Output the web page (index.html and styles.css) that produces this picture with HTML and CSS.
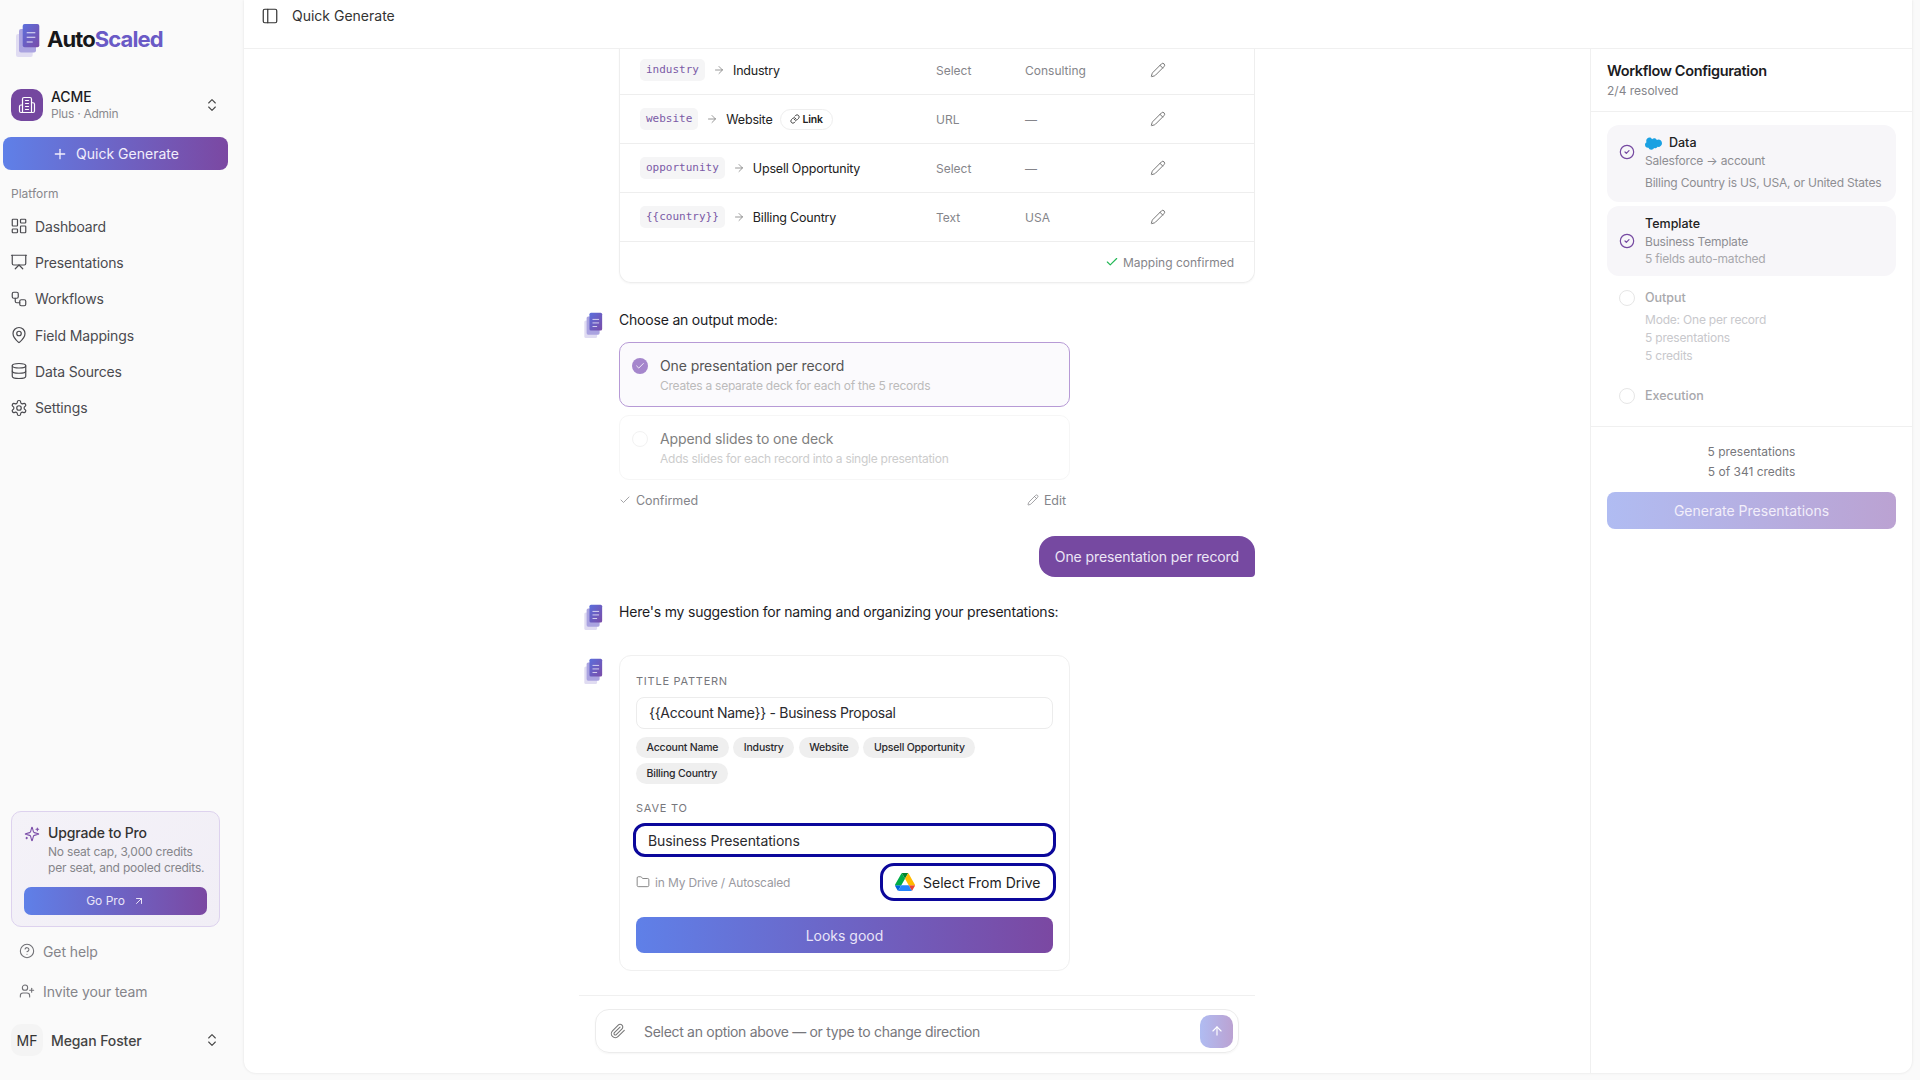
FILE: index.html
```html
<!DOCTYPE html>
<html lang="en">
<head>
    <meta charset="UTF-8">
    <meta name="viewport" content="width=device-width, initial-scale=1.0">
    <title>Quick Generate</title>
    <link rel="stylesheet" href="styles.css">
</head>
<body>
    <!-- icon sprite -->
    <svg class="sprite" xmlns="http://www.w3.org/2000/svg">
        <defs>
            <linearGradient id="docGrad" x1="0" y1="0" x2="1" y2="1">
                <stop offset="0" stop-color="#5b6fdc"/>
                <stop offset="1" stop-color="#7a4ca8"/>
            </linearGradient>
        </defs>
        <symbol id="i-logo" viewBox="0 0 24 34">
            <rect x="0" y="11" width="16.7" height="23" rx="2" fill="#e0dcf2"/>
            <rect x="3" y="6" width="17" height="23.6" rx="2" fill="#aaa3e0"/>
            <rect x="6.7" y="1" width="16.6" height="23.3" rx="2" fill="url(#docGrad)"/>
            <path d="M10.7 9.700h8.600M10.700 14.300h8.600M10.700 19h6" stroke="#e8e6f8" stroke-width="1.1" fill="none"/>
        </symbol>
        <g fill="none" stroke="currentColor" stroke-linecap="round" stroke-linejoin="round">
            <symbol id="i-panel" viewBox="0 0 24 24"><rect x="3" y="3" width="18" height="18" rx="2"/><path d="M9 3v18"/></symbol>
            <symbol id="i-updown" viewBox="0 0 24 24"><path d="m7 15 5 5 5-5"/><path d="m7 9 5-5 5 5"/></symbol>
            <symbol id="i-building" viewBox="0 0 24 24"><path d="M6 22V4a2 2 0 0 1 2-2h8a2 2 0 0 1 2 2v18Z"/><path d="M6 12H4a2 2 0 0 0-2 2v6a2 2 0 0 0 2 2h2"/><path d="M18 9h2a2 2 0 0 1 2 2v9a2 2 0 0 1-2 2h-2"/><path d="M10 6h4"/><path d="M10 10h4"/><path d="M10 14h4"/><path d="M10 18h4"/></symbol>
            <symbol id="i-plus" viewBox="0 0 24 24"><path d="M5 12h14"/><path d="M12 5v14"/></symbol>
            <symbol id="i-dashboard" viewBox="0 0 24 24"><rect x="3" y="3" width="7" height="9" rx="1"/><rect x="14" y="3" width="7" height="5" rx="1"/><rect x="14" y="12" width="7" height="9" rx="1"/><rect x="3" y="16" width="7" height="5" rx="1"/></symbol>
            <symbol id="i-presentation" viewBox="0 0 24 24"><path d="M2 3h20"/><path d="M21 3v11a2 2 0 0 1-2 2H5a2 2 0 0 1-2-2V3"/><path d="m7 21 5-5 5 5"/></symbol>
            <symbol id="i-workflow" viewBox="0 0 24 24"><rect x="3" y="3" width="8" height="8" rx="2"/><path d="M7 11v4a2 2 0 0 0 2 2h4"/><rect x="13" y="13" width="8" height="8" rx="2"/></symbol>
            <symbol id="i-pin" viewBox="0 0 24 24"><path d="M20 10c0 4.993-5.539 10.193-7.399 11.799a1 1 0 0 1-1.202 0C9.539 20.193 4 14.993 4 10a8 8 0 0 1 16 0"/><circle cx="12" cy="10" r="3"/></symbol>
            <symbol id="i-database" viewBox="0 0 24 24"><ellipse cx="12" cy="5" rx="9" ry="3"/><path d="M3 5V19A9 3 0 0 0 21 19V5"/><path d="M3 12A9 3 0 0 0 21 12"/></symbol>
            <symbol id="i-settings" viewBox="0 0 24 24"><path d="M12.22 2h-.44a2 2 0 0 0-2 2v.18a2 2 0 0 1-1 1.73l-.43.25a2 2 0 0 1-2 0l-.15-.08a2 2 0 0 0-2.73.73l-.22.38a2 2 0 0 0 .73 2.73l.15.1a2 2 0 0 1 1 1.72v.51a2 2 0 0 1-1 1.74l-.15.09a2 2 0 0 0-.73 2.73l.22.38a2 2 0 0 0 2.73.73l.15-.08a2 2 0 0 1 2 0l.43.25a2 2 0 0 1 1 1.73V20a2 2 0 0 0 2 2h.44a2 2 0 0 0 2-2v-.18a2 2 0 0 1 1-1.73l.43-.25a2 2 0 0 1 2 0l.15.08a2 2 0 0 0 2.73-.73l.22-.39a2 2 0 0 0-.73-2.73l-.15-.08a2 2 0 0 1-1-1.74v-.5a2 2 0 0 1 1-1.74l.15-.09a2 2 0 0 0 .73-2.73l-.22-.38a2 2 0 0 0-2.73-.73l-.15.08a2 2 0 0 1-2 0l-.43-.25a2 2 0 0 1-1-1.73V4a2 2 0 0 0-2-2z"/><circle cx="12" cy="12" r="3"/></symbol>
            <symbol id="i-sparkles" viewBox="0 0 24 24"><path d="M9.937 15.5A2 2 0 0 0 8.5 14.063l-6.135-1.582a.5.5 0 0 1 0-.962L8.5 9.936A2 2 0 0 0 9.937 8.5l1.582-6.135a.5.5 0 0 1 .963 0L14.063 8.5A2 2 0 0 0 15.5 9.937l6.135 1.581a.5.5 0 0 1 0 .964L15.5 14.063a2 2 0 0 0-1.437 1.437l-1.582 6.135a.5.5 0 0 1-.963 0z"/><path d="M20 3v4"/><path d="M22 5h-4"/><path d="M4 17v2"/><path d="M5 18H3"/></symbol>
            <symbol id="i-upright" viewBox="0 0 24 24"><path d="M7 7h10v10"/><path d="M7 17 17 7"/></symbol>
            <symbol id="i-help" viewBox="0 0 24 24"><circle cx="12" cy="12" r="10"/><path d="M9.09 9a3 3 0 0 1 5.83 1c0 2-3 3-3 3"/><path d="M12 17h.01"/></symbol>
            <symbol id="i-userplus" viewBox="0 0 24 24"><path d="M16 21v-2a4 4 0 0 0-4-4H6a4 4 0 0 0-4 4v2"/><circle cx="9" cy="7" r="4"/><path d="M19 8v6"/><path d="M22 11h-6"/></symbol>
            <symbol id="i-pencil" viewBox="0 0 24 24"><path d="M21.174 6.812a1 1 0 0 0-3.986-3.987L3.842 16.174a2 2 0 0 0-.5.83l-1.321 4.352a.5.5 0 0 0 .623.622l4.353-1.32a2 2 0 0 0 .83-.497z"/><path d="m15 5 4 4"/></symbol>
            <symbol id="i-right" viewBox="0 0 24 24"><path d="M5 12h14"/><path d="m12 5 7 7-7 7"/></symbol>
            <symbol id="i-link" viewBox="0 0 24 24"><path d="M10 13a5 5 0 0 0 7.54.54l3-3a5 5 0 0 0-7.07-7.07l-1.72 1.71"/><path d="M14 11a5 5 0 0 0-7.54-.54l-3 3a5 5 0 0 0 7.07 7.07l1.71-1.71"/></symbol>
            <symbol id="i-check" viewBox="0 0 24 24"><path d="M20 6 9 17l-5-5"/></symbol>
            <symbol id="i-circlecheck" viewBox="0 0 24 24"><circle cx="12" cy="12" r="10"/><path d="m9 12 2 2 4-4"/></symbol>
            <symbol id="i-folder" viewBox="0 0 24 24"><path d="M20 20a2 2 0 0 0 2-2V8a2 2 0 0 0-2-2h-7.9a2 2 0 0 1-1.69-.9L9.6 3.9A2 2 0 0 0 7.93 3H4a2 2 0 0 0-2 2v13a2 2 0 0 0 2 2Z"/></symbol>
            <symbol id="i-clip" viewBox="0 0 24 24"><path d="m21.44 11.05-9.19 9.19a6 6 0 0 1-8.49-8.49l8.57-8.57A4 4 0 1 1 18 8.84l-8.59 8.57a2 2 0 0 1-2.83-2.83l8.49-8.48"/></symbol>
            <symbol id="i-up" viewBox="0 0 24 24"><path d="m5 12 7-7 7 7"/><path d="M12 19V5"/></symbol>
        </g>
    </svg>

    <aside class="sidebar">
        <div class="brand">
            <svg class="brand-icon"><use href="#i-logo"/></svg>
            <span class="brand-name">Auto<span class="brand-accent">Scaled</span></span>
        </div>

        <div class="team">
            <div class="team-badge"><svg class="icon icon-18"><use href="#i-building"/></svg></div>
            <div class="team-info">
                <div class="team-name">ACME</div>
                <div class="team-plan">Plus · Admin</div>
            </div>
            <svg class="icon icon-16 updown"><use href="#i-updown"/></svg>
        </div>

        <button class="quick-btn" type="button"><svg class="icon icon-16"><use href="#i-plus"/></svg>Quick Generate</button>

        <div class="nav-label">Platform</div>
        <nav class="nav">
            <a class="nav-item"><svg class="icon icon-18"><use href="#i-dashboard"/></svg>Dashboard</a>
            <a class="nav-item"><svg class="icon icon-18"><use href="#i-presentation"/></svg>Presentations</a>
            <a class="nav-item"><svg class="icon icon-18"><use href="#i-workflow"/></svg>Workflows</a>
            <a class="nav-item"><svg class="icon icon-18"><use href="#i-pin"/></svg>Field Mappings</a>
            <a class="nav-item"><svg class="icon icon-18"><use href="#i-database"/></svg>Data Sources</a>
            <a class="nav-item"><svg class="icon icon-18"><use href="#i-settings"/></svg>Settings</a>
        </nav>

        <div class="upgrade">
            <div class="upgrade-head">
                <svg class="icon icon-16 upgrade-spark"><use href="#i-sparkles"/></svg>
                <div>
                    <div class="upgrade-title">Upgrade to Pro</div>
                    <div class="upgrade-text">No seat cap, 3,000 credits<br>per seat, and pooled credits.</div>
                </div>
            </div>
            <button class="gopro-btn" type="button">Go Pro<svg class="icon icon-12"><use href="#i-upright"/></svg></button>
        </div>

        <a class="side-link"><svg class="icon icon-16"><use href="#i-help"/></svg>Get help</a>
        <a class="side-link"><svg class="icon icon-16"><use href="#i-userplus"/></svg>Invite your team</a>

        <div class="user">
            <div class="user-badge">MF</div>
            <div class="user-name">Megan Foster</div>
            <svg class="icon icon-16 updown"><use href="#i-updown"/></svg>
        </div>
    </aside>

    <main class="panel">
        <header class="topbar">
            <svg class="icon icon-18"><use href="#i-panel"/></svg>
            <span>Quick Generate</span>
        </header>

        <div class="content">
            <section class="chat">
                <div class="chat-scroll">
                    <div class="mapping">
                        <div class="map-row">
                            <div class="map-field"><code class="pill">industry</code><svg class="icon icon-12 gray"><use href="#i-right"/></svg>Industry</div>
                            <div class="map-type">Select</div>
                            <div class="map-value">Consulting</div>
                            <svg class="icon icon-16 gray"><use href="#i-pencil"/></svg>
                        </div>
                        <div class="map-row">
                            <div class="map-field"><code class="pill">website</code><svg class="icon icon-12 gray"><use href="#i-right"/></svg>Website<span class="link-chip"><svg class="icon icon-10"><use href="#i-link"/></svg>Link</span></div>
                            <div class="map-type">URL</div>
                            <div class="map-value">—</div>
                            <svg class="icon icon-16 gray"><use href="#i-pencil"/></svg>
                        </div>
                        <div class="map-row">
                            <div class="map-field"><code class="pill">opportunity</code><svg class="icon icon-12 gray"><use href="#i-right"/></svg>Upsell Opportunity</div>
                            <div class="map-type">Select</div>
                            <div class="map-value">—</div>
                            <svg class="icon icon-16 gray"><use href="#i-pencil"/></svg>
                        </div>
                        <div class="map-row">
                            <div class="map-field"><code class="pill">{{country}}</code><svg class="icon icon-12 gray"><use href="#i-right"/></svg>Billing Country</div>
                            <div class="map-type">Text</div>
                            <div class="map-value">USA</div>
                            <svg class="icon icon-16 gray"><use href="#i-pencil"/></svg>
                        </div>
                        <div class="map-foot"><svg class="icon icon-14 green"><use href="#i-check"/></svg>Mapping confirmed</div>
                    </div>

                    <div class="msg msg-choose">
                        <svg class="msg-avatar"><use href="#i-logo"/></svg>
                        <div class="msg-body">
                            <p class="msg-text">Choose an output mode:</p>
                            <div class="option option-on">
                                <span class="radio radio-on"><svg class="icon icon-10"><use href="#i-check"/></svg></span>
                                <div>
                                    <div class="option-title">One presentation per record</div>
                                    <div class="option-sub">Creates a separate deck for each of the 5 records</div>
                                </div>
                            </div>
                            <div class="option">
                                <span class="radio"></span>
                                <div>
                                    <div class="option-title">Append slides to one deck</div>
                                    <div class="option-sub">Adds slides for each record into a single presentation</div>
                                </div>
                            </div>
                            <div class="confirm-row">
                                <span class="confirm-item"><svg class="icon icon-12"><use href="#i-check"/></svg>Confirmed</span>
                                <span class="confirm-item"><svg class="icon icon-12"><use href="#i-pencil"/></svg>Edit</span>
                            </div>
                        </div>
                    </div>

                    <div class="bubble">One presentation per record</div>

                    <div class="msg msg-suggest">
                        <svg class="msg-avatar"><use href="#i-logo"/></svg>
                        <p class="msg-text">Here's my suggestion for naming and organizing your presentations:</p>
                    </div>

                    <div class="msg msg-card">
                        <svg class="msg-avatar"><use href="#i-logo"/></svg>
                        <div class="form-card">
                            <div class="form-label">TITLE PATTERN</div>
                            <div class="text-field">{{Account Name}} - Business Proposal</div>
                            <div class="chips">
                                <span class="chip">Account Name</span>
                                <span class="chip">Industry</span>
                                <span class="chip">Website</span>
                                <span class="chip">Upsell Opportunity</span>
                                <span class="chip">Billing Country</span>
                            </div>
                            <div class="form-label form-label-save">SAVE TO</div>
                            <div class="text-field text-field-focus">Business Presentations</div>
                            <div class="drive-row">
                                <span class="drive-path"><svg class="icon icon-14"><use href="#i-folder"/></svg>in My Drive / Autoscaled</span>
                                <button class="drive-btn" type="button">
                                    <svg class="drive-logo" viewBox="0 0 87.3 78">
                                        <path d="m6.6 66.85 3.85 6.65c.8 1.4 1.95 2.5 3.3 3.3l13.75-23.8h-27.5c0 1.55.4 3.1 1.2 4.5z" fill="#0066da"/>
                                        <path d="m43.65 25-13.75-23.8c-1.35.8-2.5 1.9-3.3 3.3l-25.4 44a9.06 9.06 0 0 0-1.2 4.5h27.5z" fill="#00ac47"/>
                                        <path d="m73.55 76.8c1.35-.8 2.5-1.9 3.3-3.3l1.6-2.75 7.65-13.25c.8-1.4 1.2-2.95 1.2-4.5h-27.502l5.852 11.5z" fill="#ea4335"/>
                                        <path d="m43.65 25 13.75-23.8c-1.35-.8-2.9-1.2-4.5-1.2h-18.5c-1.6 0-3.15.45-4.5 1.2z" fill="#00832d"/>
                                        <path d="m59.8 53h-32.3l-13.75 23.8c1.35.8 2.9 1.2 4.5 1.2h50.8c1.6 0 3.15-.45 4.5-1.2z" fill="#2684fc"/>
                                        <path d="m73.4 26.5-12.7-22c-.8-1.4-1.95-2.5-3.3-3.3l-13.75 23.8 16.15 28h27.45c0-1.55-.4-3.1-1.2-4.5z" fill="#ffba00"/>
                                    </svg>
                                    Select From Drive
                                </button>
                            </div>
                            <button class="looks-btn" type="button">Looks good</button>
                        </div>
                    </div>
                </div>

                <div class="composer-wrap">
                    <div class="composer">
                        <svg class="icon icon-16 composer-clip"><use href="#i-clip"/></svg>
                        <span class="composer-text">Select an option above — or type to change direction</span>
                        <button class="send-btn" type="button"><svg class="icon icon-14"><use href="#i-up"/></svg></button>
                    </div>
                </div>
            </section>

            <aside class="config">
                <div class="config-head">
                    <div class="config-title">Workflow Configuration</div>
                    <div class="config-sub">2/4 resolved</div>
                </div>

                <div class="steps">
                    <div class="step step-done">
                        <svg class="icon icon-16 step-icon step-icon-top"><use href="#i-circlecheck"/></svg>
                        <div>
                            <div class="step-title">
                                <svg class="sf-logo" viewBox="0 -1 32 23"><path d="M13.3 2.6A5.6 5.6 0 0 1 17.4.8c2.1 0 3.9 1.2 4.9 2.9a6.7 6.7 0 0 1 2.8-.6C28.900 3.100 32 6.200 32 10s-3.100 6.900-6.900 6.900c-.5 0-.9 0-1.300-.1a5 5 0 0 1-6.600 2.100A5.800 5.800 0 0 1 6.500 18.500a4.400 4.400 0 0 1-.9.1C2.500 18.600 0 16 0 12.900c0-2.100 1.100-3.900 2.800-4.900A6.400 6.400 0 0 1 2.300 5.500C2.300 2 5.200-.8 8.700-.8c2.100 0 3.400 1.200 4.600 3.400z" fill="#1ba1e2"/></svg>
                                Data
                            </div>
                            <div class="step-line">Salesforce → account</div>
                            <div class="step-line step-gap">Billing Country is US, USA, or United States</div>
                        </div>
                    </div>
                    <div class="step step-done">
                        <svg class="icon icon-16 step-icon"><use href="#i-circlecheck"/></svg>
                        <div>
                            <div class="step-title">Template</div>
                            <div class="step-line">Business Template</div>
                            <div class="step-line step-tight">5 fields auto-matched</div>
                        </div>
                    </div>
                    <div class="step step-todo">
                        <span class="step-ring"></span>
                        <div>
                            <div class="step-title">Output</div>
                            <div class="step-lines">
                                <div class="step-line">Mode: One per record</div>
                                <div class="step-line">5 presentations</div>
                                <div class="step-line">5 credits</div>
                            </div>
                        </div>
                    </div>
                    <div class="step step-todo">
                        <span class="step-ring"></span>
                        <div class="step-title">Execution</div>
                    </div>
                </div>

                <div class="config-foot">
                    <div class="foot-line">5 presentations</div>
                    <div class="foot-line">5 of 341 credits</div>
                    <button class="generate-btn" type="button">Generate Presentations</button>
                </div>
            </aside>
        </div>
    </main>
</body>
</html>
```

FILE: styles.css
```css
* {
    box-sizing: border-box;
}
html, body {
    height: 100%;
}
body {
    margin: 0;
    display: flex;
    overflow: hidden;
    font-family: Inter, "Noto Sans", Arial, sans-serif;
    font-size: 14px;
    color: #1c1c1f;
    background-color: #fafafa;
}
button {
    font-family: inherit;
    border: none;
    cursor: pointer;
}
p {
    margin: 0;
}
.sprite {
    display: block;
    width: 0;
    height: 0;
}
.icon {
    flex-shrink: 0;
    fill: none;
    stroke: currentColor;
    stroke-width: 2;
    stroke-linecap: round;
    stroke-linejoin: round;
}
.icon-10 { width: 10px; height: 10px; }
.icon-12 { width: 12px; height: 12px; }
.icon-14 { width: 14px; height: 14px; }
.icon-16 { width: 16px; height: 16px; }
.icon-18 { width: 18px; height: 18px; stroke-width: 1.6; }
.gray { color: #777; stroke-width: 1.5; }
.green { color: #22b855; }

/* sidebar */
.sidebar {
    width: 244px;
    height: 1080px;
    flex-shrink: 0;
    display: flex;
    flex-direction: column;
    padding-top: 23px;
}
.brand {
    display: flex;
    align-items: center;
    height: 34px;
    margin-left: 16px;
    gap: 7px;
}
.brand-icon {
    width: 24px;
    height: 34px;
}
.brand-name {
    margin-top: -2px;
    font-size: 22px;
    font-weight: 700;
    letter-spacing: -0.9px;
    color: #17171a;
}
.brand-accent {
    color: #6a5ac6;
}
.team {
    display: flex;
    align-items: center;
    margin: 32px 0 0 11px;
    height: 32px;
}
.team-badge {
    width: 32px;
    height: 32px;
    border-radius: 10px;
    background-color: #74479f;
    color: #fff;
    display: flex;
    align-items: center;
    justify-content: center;
}
.team-info {
    margin-left: 8px;
    flex: 1;
}
.team-name {
    font-size: 14px;
    font-weight: 500;
    line-height: 17px;
    letter-spacing: -0.1px;
}
.team-plan {
    margin-top: 1px;
    font-size: 12px;
    line-height: 16px;
    letter-spacing: -0.25px;
    color: #8a8a8f;
}
.updown {
    margin-right: 24px;
    color: #444;
    stroke-width: 1.6;
}
.quick-btn {
    display: flex;
    align-items: center;
    justify-content: center;
    gap: 8px;
    width: 225px;
    height: 33px;
    margin: 16px 0 0 3px;
    border-radius: 8px;
    font-size: 14px;
    color: #f2eefc;
    background: linear-gradient(90deg, #5f80e8, #7b48a2);
}
.nav-label {
    margin: 16px 0 0 11px;
    line-height: 16px;
    font-size: 12px;
    color: #88888c;
}
.nav {
    margin-top: 6px;
    display: flex;
    flex-direction: column;
    flex: 1;
}
.nav-item {
    display: flex;
    align-items: center;
    gap: 7px;
    height: 36.3px;
    padding-left: 10px;
    font-size: 14px;
    letter-spacing: -0.15px;
    color: #4a4a4f;
}
.upgrade {
    width: 209px;
    height: 116px;
    margin-left: 11px;
    padding: 12px 12px 0;
    border: 1px solid #ddd2ee;
    border-radius: 10px;
    background: linear-gradient(135deg, #f4f2f8, #f1eef6);
}
.upgrade-head {
    display: flex;
    gap: 8px;
}
.upgrade-spark {
    color: #7a4ca8;
    stroke-width: 1.6;
    margin-top: 2px;
}
.upgrade-title {
    font-size: 14px;
    font-weight: 500;
    line-height: 18px;
    letter-spacing: -0.15px;
    color: #333;
}
.upgrade-text {
    margin-top: 2px;
    font-size: 12px;
    line-height: 16.4px;
    letter-spacing: -0.2px;
    white-space: nowrap;
    color: #85858a;
}
.gopro-btn {
    display: flex;
    align-items: center;
    justify-content: center;
    gap: 8px;
    width: 183px;
    height: 28px;
    margin-top: 10px;
    border-radius: 7px;
    font-size: 12px;
    color: #e9e4f8;
    background: linear-gradient(90deg, #5f80e8, #7b48a2);
}
.side-link {
    display: flex;
    align-items: center;
    gap: 8px;
    height: 40px;
    padding-left: 19px;
    font-size: 14px;
    letter-spacing: -0.1px;
    color: #85858a;
}
.side-link .icon {
    stroke-width: 1.6;
    color: #6f6f74;
}
.upgrade + .side-link {
    margin-top: 4px;
}
.user {
    display: flex;
    align-items: center;
    height: 32px;
    margin: 13px 0 24px 11px;
}
.user-badge {
    width: 32px;
    height: 32px;
    border-radius: 10px;
    background-color: #f4f4f4;
    display: flex;
    align-items: center;
    justify-content: center;
    font-size: 14px;
    color: #333;
}
.user-name {
    flex: 1;
    margin-left: 8px;
    font-size: 14px;
    font-weight: 500;
    letter-spacing: -0.1px;
    color: #444;
}

/* main panel */
.panel {
    flex: 1;
    height: 1073px;
    margin-right: 8px;
    display: flex;
    flex-direction: column;
    background-color: #fff;
    border-radius: 0 0 12px 12px;
    box-shadow: 0 0 3px rgba(0, 0, 0, 0.1);
    overflow: hidden;
}
.topbar {
    height: 49px;
    flex-shrink: 0;
    display: flex;
    align-items: flex-start;
    gap: 13px;
    padding: 7px 0 0 17px;
    border-bottom: 1px solid #f0f0f0;
    line-height: 18px;
    color: #333;
}
.content {
    flex: 1;
    display: flex;
    min-height: 0;
}

/* chat */
.chat {
    flex: 1;
    min-width: 0;
    display: flex;
    flex-direction: column;
    align-items: center;
}
.chat-scroll,
.composer-wrap {
    width: 676px;
}
.chat-scroll {
    flex: 1;
    min-height: 0;
    display: flex;
    flex-direction: column;
    justify-content: flex-end;
    overflow: hidden;
    padding-bottom: 24px;
}
.chat-scroll > * {
    flex-shrink: 0;
}
.mapping {
    margin-left: 40px;
    border: 1px solid #eeeeee;
    border-top: none;
    border-radius: 0 0 12px 12px;
    box-shadow: 0 1px 2px rgba(0, 0, 0, 0.04);
}
.map-row {
    display: grid;
    grid-template-columns: 296px 89px 125px 1fr;
    align-items: center;
    height: 49px;
    padding-left: 20px;
    border-bottom: 1px solid #eeeeee;
    font-size: 12px;
}
.map-field {
    display: flex;
    align-items: center;
    gap: 8px;
    font-size: 12.5px;
    letter-spacing: -0.2px;
    color: #222;
}
.pill {
    height: 22px;
    padding: 0 6px;
    border-radius: 5px;
    background-color: #f5f5f6;
    font-family: "DejaVu Sans Mono", "Liberation Mono", monospace;
    font-size: 11px;
    line-height: 22px;
    letter-spacing: 0;
    color: #7b5aa6;
}
.link-chip {
    display: flex;
    align-items: center;
    gap: 2px;
    height: 21px;
    padding: 0 9px;
    border: 1px solid #eeeeee;
    border-radius: 11px;
    font-size: 10.5px;
    font-weight: 600;
}
.map-type,
.map-value {
    color: #85858a;
}
.map-foot {
    display: flex;
    align-items: center;
    justify-content: flex-end;
    gap: 4px;
    height: 40px;
    padding-right: 20px;
    font-size: 12px;
    color: #85858a;
}
.msg {
    display: flex;
}
.msg-avatar {
    width: 19px;
    height: 26px;
    flex-shrink: 0;
    margin: 3px 16px -7px 5px;
}
.msg-body {
    flex: 1;
}
.msg-text {
    font-size: 14px;
    line-height: 22px;
    letter-spacing: -0.2px;
    color: #1c1c1f;
}
.msg-choose {
    margin-top: 26px;
}
.option {
    display: flex;
    width: 451px;
    height: 65px;
    margin-top: 8px;
    padding: 14px 12px 0;
    gap: 12px;
    border: 1px solid #f3f3f3;
    border-radius: 10px;
    opacity: 0.75;
}
.option-on {
    margin-top: 11px;
    opacity: 1;
    background-color: #fbfafd;
    border-color: #b79ad6;
}
.radio {
    width: 16px;
    height: 16px;
    margin-top: 1px;
    flex-shrink: 0;
    border: 1px solid #eeeeee;
    border-radius: 50%;
    display: flex;
    align-items: center;
    justify-content: center;
}
.radio-on {
    background-color: #a586cc;
    border: none;
    color: #fff;
}
.option-title {
    font-size: 14px;
    line-height: 18px;
    letter-spacing: -0.1px;
    color: #555;
}
.option-sub {
    margin-top: 3px;
    font-size: 12px;
    line-height: 16px;
    letter-spacing: -0.25px;
    color: #bbbbbb;
}
.confirm-row {
    display: flex;
    justify-content: space-between;
    width: 447px;
    height: 18px;
    margin-top: 11px;
    font-size: 12.5px;
    letter-spacing: -0.05px;
    color: #85858a;
}
.confirm-item {
    display: flex;
    align-items: center;
    gap: 5px;
}
.confirm-item .icon {
    stroke-width: 1.5;
}
.bubble {
    align-self: flex-end;
    height: 41px;
    margin-top: 27px;
    padding: 0 16px;
    border-radius: 16px 16px 4px 16px;
    background-color: #7649a1;
    font-size: 14px;
    line-height: 41px;
    letter-spacing: -0.1px;
    color: #ece6f6;
}
.msg-suggest {
    margin-top: 24px;
}
.msg-card {
    margin-top: 32px;
}
.form-card {
    width: 451px;
    height: 316px;
    padding: 17px 16px 0;
    border: 1px solid #f0f0f0;
    border-radius: 12px;
}
.form-label {
    font-size: 11px;
    line-height: 16px;
    letter-spacing: 0.75px;
    color: #77777c;
}
.form-label-save {
    margin-top: 16px;
}
.text-field {
    height: 32px;
    margin-top: 8px;
    padding: 0 12px;
    border: 1px solid #ececec;
    border-radius: 8px;
    font-size: 14px;
    line-height: 30px;
    letter-spacing: -0.3px;
    color: #2a2a2e;
}
.text-field-focus {
    height: 34px;
    margin: 7px -3px 0;
    padding: 0 12px;
    border: 3px solid #0b079b;
    border-radius: 12px;
    line-height: 29px;
    letter-spacing: -0.1px;
}
.chips {
    display: flex;
    flex-wrap: wrap;
    gap: 5px 4.5px;
    margin-top: 8px;
}
.chip {
    height: 21px;
    padding: 0 10.5px;
    border-radius: 11px;
    background-color: #efefef;
    font-size: 10.5px;
    font-weight: 500;
    line-height: 21px;
    letter-spacing: -0.2px;
    color: #2a2a2e;
}
.drive-row {
    display: flex;
    align-items: center;
    justify-content: space-between;
    height: 38px;
    margin: 6px -3px 0 0;
}
.drive-path {
    display: flex;
    align-items: center;
    gap: 5px;
    font-size: 12px;
    letter-spacing: -0.15px;
    color: #9a9a9f;
}
.drive-path .icon {
    stroke-width: 1.5;
    color: #777;
}
.drive-btn {
    display: flex;
    align-items: center;
    gap: 8px;
    width: 176px;
    height: 38px;
    padding: 0 0 0 12px;
    border: 3px solid #0b079b;
    border-radius: 14px;
    background-color: #fff;
    font-size: 14px;
    color: #222;
}
.drive-logo {
    width: 20px;
    height: 18px;
    flex-shrink: 0;
}
.looks-btn {
    display: block;
    width: 100%;
    height: 36px;
    margin-top: 16px;
    border-radius: 8px;
    font-size: 14px;
    color: #e9e4f8;
    background: linear-gradient(90deg, #5f80e8, #7b48a2);
}

/* composer */
.composer-wrap {
    flex-shrink: 0;
    height: 78px;
    padding: 13px 16px 0;
    border-top: 1px solid #f0f0f0;
}
.composer {
    display: flex;
    align-items: center;
    height: 44px;
    padding: 0 5px 0 14px;
    border: 1px solid #ececec;
    border-radius: 14px;
    box-shadow: 0 1px 2px rgba(0, 0, 0, 0.04);
}
.composer-clip {
    color: #777;
    stroke-width: 1.6;
}
.composer-text {
    flex: 1;
    margin-left: 18px;
    font-size: 14px;
    letter-spacing: -0.3px;
    color: #77777c;
}
.send-btn {
    width: 33px;
    height: 33px;
    border-radius: 10px;
    color: #fff;
    display: flex;
    align-items: center;
    justify-content: center;
    background: linear-gradient(90deg, #b0bcf2, #bba2d2);
}

/* right panel */
.config {
    width: 322px;
    flex-shrink: 0;
    border-left: 1px solid #f0f0f0;
}
.config-head {
    height: 63px;
    padding: 12px 16px 0;
    border-bottom: 1px solid #f0f0f0;
}
.config-title {
    font-size: 14.5px;
    font-weight: 600;
    line-height: 20px;
    letter-spacing: -0.35px;
    color: #1c1c1f;
}
.config-sub {
    margin-top: 1px;
    font-size: 12px;
    line-height: 18px;
    color: #85858a;
}
.steps {
    display: flex;
    flex-direction: column;
    gap: 4px;
    height: 315px;
    padding: 13px 16px 0;
    border-bottom: 1px solid #f0f0f0;
}
.step {
    display: flex;
    align-items: flex-start;
    gap: 10px;
    padding: 9px 10px 9px 12px;
    border-radius: 12px;
}
.step-done {
    align-items: center;
    background-color: #f7f6f9;
}
.step-icon {
    color: #7649a1;
    stroke-width: 1.8;
}
.step-icon-top {
    align-self: flex-start;
    margin-top: 10px;
}
.step-ring {
    width: 16px;
    height: 16px;
    margin-top: 1px;
    flex-shrink: 0;
    border: 1.5px solid #e6e6e6;
    border-radius: 50%;
}
.step-title {
    display: flex;
    align-items: center;
    gap: 7px;
    font-size: 12.5px;
    font-weight: 500;
    line-height: 18px;
    color: #222;
}
.sf-logo {
    width: 17px;
    height: 13px;
}
.step-line {
    font-size: 12px;
    line-height: 18px;
    letter-spacing: -0.2px;
    color: #8e8e93;
    white-space: nowrap;
}
.step-gap {
    margin: 4px 0 1px;
}
.step-tight {
    line-height: 16px;
    color: #a8a8ac;
}
.step-lines {
    margin-top: 4px;
}
.step-todo .step-title {
    color: #a8a8ac;
}
.step-todo .step-line {
    color: #c8c8cc;
}
.config-foot {
    padding: 15px 16px 0;
    text-align: center;
}
.foot-line {
    font-size: 12px;
    line-height: 20px;
    color: #77777c;
}
.generate-btn {
    width: 100%;
    height: 37px;
    margin-top: 10px;
    border-radius: 8px;
    font-size: 14px;
    color: #f2eefa;
    background: linear-gradient(90deg, #b0bcf2, #bba2d2);
}
```
